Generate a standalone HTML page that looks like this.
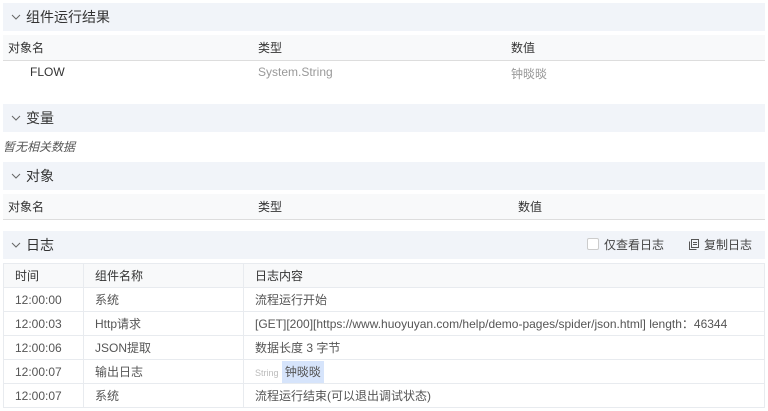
<!DOCTYPE html>
<html><head><meta charset="utf-8"><style>
*{margin:0;padding:0;box-sizing:border-box}
body{width:768px;height:411px;background:#fff;font-family:"Liberation Sans","Noto Sans CJK SC",sans-serif;font-size:12px;color:#555;position:relative;overflow:hidden}
.a{position:absolute}
.hd{position:absolute;left:3px;width:762px;height:28px;background:#f1f4f9;font-size:14px;color:#333;line-height:28px;padding-left:23px}
.hd svg{position:absolute;left:8px;top:11px}
.th{position:absolute;left:3px;width:762px;height:26px;background:#f8f9fa;border-bottom:1px solid #ddd;line-height:27px;color:#333}
.th span,.r span{position:absolute}
table{position:absolute;left:3px;top:263px;width:762px;border-collapse:collapse}
td{border:1px solid #e8ebef;height:24px;padding-left:11px;color:#555;white-space:nowrap}
tr:first-child td{background:#f8f9fa;color:#333}
</style></head><body>
<div class="hd" style="top:3px"><svg width="10" height="6"><path d="M1 1 L5 5 L9 1" fill="none" stroke="#666" stroke-width="1"/></svg>组件运行结果</div>
<div class="th" style="top:35px"><span style="left:5px">对象名</span><span style="left:255px">类型</span><span style="left:508px">数值</span></div>
<div class="a" style="top:65px;left:30px;color:#333">FLOW</div>
<div class="a" style="top:65px;left:258px;color:#999">System.String</div>
<div class="a" style="top:65px;left:511px;color:#999">钟晱晱</div>
<div class="hd" style="top:104px"><svg width="10" height="6"><path d="M1 1 L5 5 L9 1" fill="none" stroke="#666" stroke-width="1"/></svg>变量</div>
<div class="a" style="top:138px;left:3px;font-style:italic;color:#555">暂无相关数据</div>
<div class="hd" style="top:162px"><svg width="10" height="6"><path d="M1 1 L5 5 L9 1" fill="none" stroke="#666" stroke-width="1"/></svg>对象</div>
<div class="th" style="top:194px"><span style="left:5px">对象名</span><span style="left:255px">类型</span><span style="left:515px">数值</span></div>
<div class="hd" style="top:231px"><svg width="10" height="6"><path d="M1 1 L5 5 L9 1" fill="none" stroke="#666" stroke-width="1"/></svg>日志
<span class="a" style="left:584px;top:7px;width:12px;height:12px;border:1px solid #ccc;border-radius:2px;background:#fff"></span>
<span class="a" style="left:601px;font-size:12px;color:#444">仅查看日志</span>
<svg class="a" style="left:686px;top:8px" width="10" height="11"><rect x="2.5" y="0.5" width="7" height="8" fill="none" stroke="#555"/><path d="M0.5 2.5 V10.5 H7.5" fill="none" stroke="#555"/><path d="M4 3.5H8M4 5.5H8" stroke="#555"/></svg>
<span class="a" style="left:701px;font-size:12px;color:#444">复制日志</span></div>
<table>
<tr><td style="width:80px">时间</td><td style="width:160px">组件名称</td><td>日志内容</td></tr>
<tr><td>12:00:00</td><td>系统</td><td>流程运行开始</td></tr>
<tr><td>12:00:03</td><td>Http请求</td><td>[GET][200][https://www.huoyuyan.com/help/demo-pages/spider/json.html] length：46344</td></tr>
<tr><td>12:00:06</td><td>JSON提取</td><td>数据长度 3 字节</td></tr>
<tr><td>12:00:07</td><td>输出日志</td><td><span style="font-size:9px;color:#bbb">String</span> <span style="background:#d6e4fb;padding:4px 3px">钟晱晱</span></td></tr>
<tr><td>12:00:07</td><td>系统</td><td>流程运行结束(可以退出调试状态)</td></tr>
</table>
</body></html>
